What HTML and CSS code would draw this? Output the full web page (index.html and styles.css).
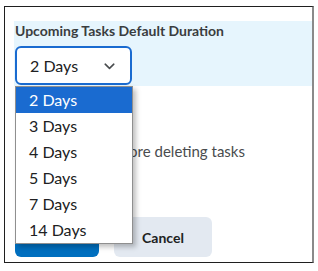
FILE: index.html
```html
<!DOCTYPE html>
<html lang="en">
<head>
    <meta charset="UTF-8">
    <title>Upcoming Tasks Settings</title>
    <link rel="stylesheet" href="styles.css">
</head>
<body>
    <div class="frame">
        <div class="field">
            <div class="field-label">Upcoming Tasks Default Duration</div>
            <div class="select-wrap">
                <div class="select">
                    <span>2 Days</span>
                    <svg class="chevron" width="11" height="7" viewBox="0 0 11 7">
                        <path d="M1.2 1.2 L5.5 5.3 L9.8 1.2" fill="none" stroke="#494c4e" stroke-width="1.6" stroke-linecap="round" stroke-linejoin="round"/>
                    </svg>
                </div>
                <!-- open option list -->
                <ul class="options">
                    <li class="option selected">2 Days</li>
                    <li class="option">3 Days</li>
                    <li class="option">4 Days</li>
                    <li class="option">5 Days</li>
                    <li class="option">7 Days</li>
                    <li class="option">14 Days</li>
                </ul>
            </div>
        </div>

        <label class="check-row">
            <span class="checkbox"></span>
            <span class="check-text">Confirm before deleting tasks</span>
        </label>

        <div class="actions">
            <button class="btn btn-primary">Save</button>
            <button class="btn btn-secondary">Cancel</button>
        </div>
    </div>
</body>
</html>
```

FILE: styles.css
```css
:root {
    --text: #494c4e;
    --blue: #1a6bd0;
    --band: #e6f5fd;
}

* {
    margin: 0;
    padding: 0;
    box-sizing: border-box;
}

body {
    font-family: Lato, "Liberation Sans", sans-serif;
    color: var(--text);
    background: #fff;
}

.frame {
    margin: 6px 0 0 4px;
    width: 310px;
    height: 257px;
    border: 1px solid #1f1f1f;
    border-right: 2px solid #8a8a8a;
    padding: 14px 0 0 9px;
}

.field {
    background: var(--band);
    padding: 1px 0 0 1px;
    height: 65px;
}

.field-label {
    font-size: 14px;
    font-weight: 700;
    line-height: 17px;
    color: #3a3d3f;
}

.select-wrap {
    position: relative;
    width: 117px;
    margin-top: 7px;
}

.select {
    height: 39px;
    border: 2px solid var(--blue);
    border-radius: 6px;
    background: #fff;
    display: flex;
    align-items: center;
    justify-content: space-between;
    padding: 0 15px 0 13px;
    font-size: 16px;
    color: #202122;
}

.chevron {
    margin-top: 1px;
}

.options {
    position: absolute;
    top: 40px;
    left: 0;
    width: 118px;
    list-style: none;
    background: #fff;
    border: 1px solid #8f8f8f;
    box-shadow: 3px 3px 5px rgba(0, 0, 0, 0.25);
    z-index: 10;
}

.option {
    height: 26px;
    line-height: 26px;
    padding-left: 13px;
    font-size: 16px;
    color: #202122;
}

.option.selected {
    background: var(--blue);
    color: #fff;
}

.check-row {
    display: flex;
    align-items: center;
    gap: 16px;
    margin-top: 55px;
    height: 20px;
    font-size: 15px;
}

.checkbox {
    width: 20px;
    height: 20px;
    border: 1px solid #6e7376;
    border-radius: 5px;
    margin-left: 1px;
}

.actions {
    display: flex;
    gap: 15px;
    margin-top: 56px;
    padding-left: 1px;
}

.btn {
    height: 40px;
    border: none;
    border-radius: 6px;
    font-family: inherit;
    font-size: 14px;
    font-weight: 700;
}

.btn-primary {
    width: 84px;
    background: #006fbf;
    color: #fff;
}

.btn-secondary {
    width: 98px;
    background: #e3e9f1;
    color: #202122;
}
```
